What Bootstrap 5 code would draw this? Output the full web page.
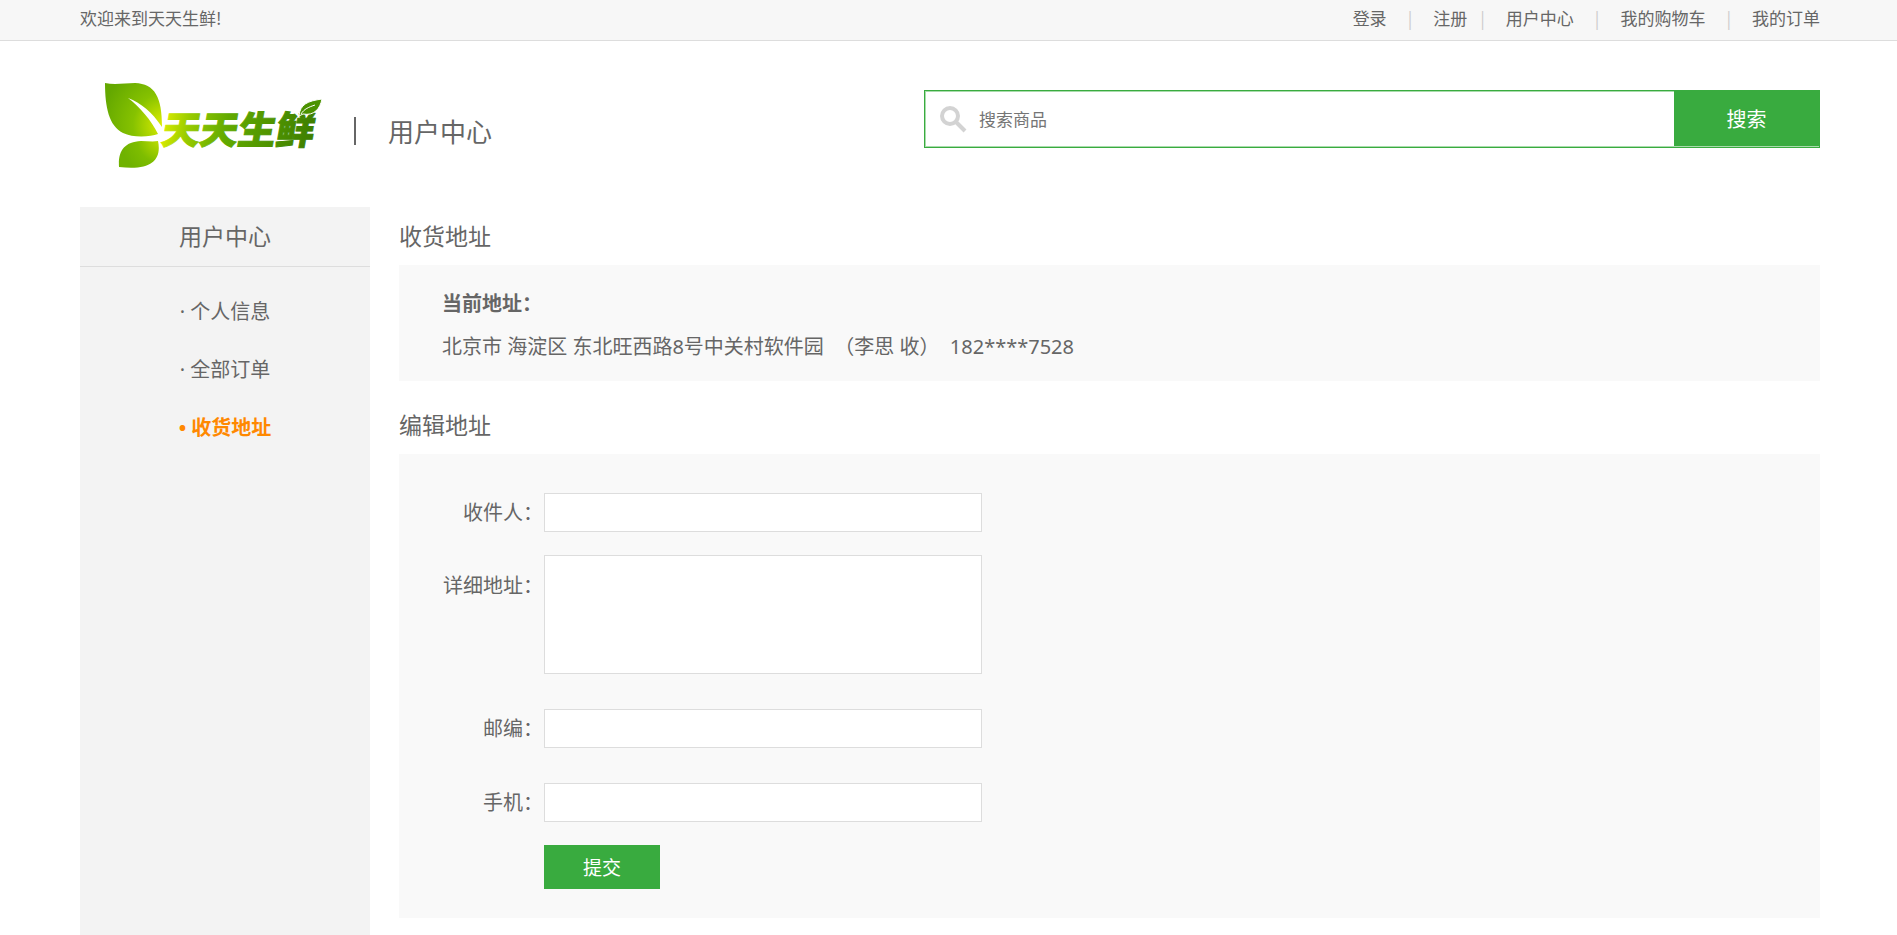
<!DOCTYPE html>
<html lang="zh-CN">
<head>
<meta charset="utf-8">
<meta name="viewport" content="width=device-width, initial-scale=1">
<title>天天生鲜 - 用户中心</title>
<link href="https://cdn.jsdelivr.net/npm/bootstrap@5.3.0/dist/css/bootstrap.min.css" rel="stylesheet">
<style>
:root { --green: #39ab3f; --ink: #666; --line: #ddd; }
body { font-family: "Noto Sans CJK SC", sans-serif; font-size: 20px; line-height: 30px; color: var(--ink); background: #fff; }
a { color: inherit; text-decoration: none; }
.wrap { padding-left: 80px; padding-right: 77px; }
.topbar { background: #f7f7f7; border-bottom: 1px solid var(--line); font-size: 17px; line-height: 24px; padding-top: 6px; padding-bottom: 10px; }
.topbar li + li::before { content: "|"; color: #ccc; margin: 0 21px; }
.topbar li.snug + li::before { margin-left: 13px; }
.brand-row { padding-top: 42px; padding-bottom: 39px; }
.brand-logo { margin-left: 25px; }
.brand-sub { font-size: 26px; line-height: 40px; gap: 32px; margin: 11px 0 0 29px; }
.brand-sub i { width: 2px; height: 28px; background: var(--ink); }
.search-box { width: 896px; height: 58px; margin-top: 7px; border: 1px solid var(--green); box-shadow: inset 0 0 0 1px #a9dcac; }
.search-box svg { margin: 0 12px 0 15px; }
.search-box input { font-size: 17px; color: var(--ink); }
.search-box input::placeholder { color: #757575; opacity: 1; }
.search-box button { width: 145px; margin-bottom: 1px; font-size: 20px; }
.btn-fresh, .btn-fresh:hover, .btn-fresh:active { background: var(--green); color: #fff; border: 0; border-radius: 0; padding: 0; }
.sidebar { width: 290px; min-height: 728px; background: #f3f3f3; }
.section-title { font-size: 23px; line-height: 30px; font-weight: 400; margin: 0; }
.sidebar .section-title { padding: 13px 0 16px; border-bottom: 1px solid var(--line); }
.sidebar ul { padding-top: 16px; }
.sidebar li { line-height: 58px; }
.sidebar ul, .panel-now { font-family: "Noto Sans", "Noto Sans CJK SC", sans-serif; }
.sidebar .current { color: #ff8800; font-weight: 700; }
.content-col { margin-left: 29px; }
.content-col .section-title { padding: 13px 0 15px; }
.panel { background: #f9f9f9; }
.panel-now { padding: 24px 43px 19px; margin-bottom: 15px; }
.panel-now p { margin: 12px 0 0; line-height: 31px; }
.panel-edit { padding: 39px 43px 29px; }
.field-row { margin-bottom: 23px; }
.field-row-wide { margin-bottom: 35px; }
.field-label { width: 102px; padding-right: 1px; line-height: 38px; }
.field-box { width: 438px; max-width: 100%; height: 39px; border: 1px solid var(--line); border-radius: 0; padding: 0 8px; font-size: 19px; }
textarea.field-box { height: 119px; resize: none; }
.label-low { padding-top: 11px; }
.btn-send { width: 116px; height: 44px; font-size: 19px; }
</style>
</head>
<body>
<div class="topbar wrap d-flex justify-content-between">
  <div>欢迎来到天天生鲜!</div>
  <ul class="list-unstyled d-flex mb-0">
    <li><a href="#">登录</a></li>
    <li class="snug"><a href="#">注册</a></li>
    <li><a href="#">用户中心</a></li>
    <li><a href="#">我的购物车</a></li>
    <li><a href="#">我的订单</a></li>
  </ul>
</div>

<header class="brand-row wrap d-flex justify-content-between align-items-start">
  <div class="d-flex align-items-center">
    <a href="#" class="brand-logo d-block" aria-label="天天生鲜">
      <svg class="d-block" width="220" height="85" viewBox="0 0 220 85">
        <defs>
          <radialGradient id="leafA" gradientUnits="userSpaceOnUse" cx="60" cy="42" r="64">
            <stop offset="0" stop-color="#e2f000"/><stop offset=".5" stop-color="#86c200"/><stop offset="1" stop-color="#64a800"/>
          </radialGradient>
          <radialGradient id="leafB" gradientUnits="userSpaceOnUse" cx="56" cy="56" r="40">
            <stop offset="0" stop-color="#c4e000"/><stop offset=".6" stop-color="#7ebd00"/><stop offset="1" stop-color="#6fb200"/>
          </radialGradient>
          <linearGradient id="wordFill" gradientUnits="userSpaceOnUse" x1="60" y1="0" x2="214" y2="0">
            <stop offset="0" stop-color="#e6f200"/><stop offset=".2" stop-color="#98cb00"/><stop offset=".45" stop-color="#62aa00"/><stop offset="1" stop-color="#3f8000"/>
          </linearGradient>
        </defs>
        <path fill="url(#leafA)" d="M0 0C10 2 20 0 30 0C50 1 57 14 57 44C47 29 36 20 23 15C35 24 46 37 53 51C45 54 28 55 18 50C4 43 0 24 0 0Z"/>
        <path fill="url(#leafB)" d="M14 84C13 68 19 59 36 58C42 58 48 59 53 58C57 77 46 88 14 84Z"/>
        <text x="66" y="61" transform="skewX(-10)" font-family="'Noto Sans CJK SC', sans-serif" font-weight="900" font-size="38" fill="url(#wordFill)" stroke="url(#wordFill)" stroke-width="1">天天生鲜</text>
        <path fill="#4b9200" stroke="#fff" stroke-width="1" d="M194 33C195 21 203 18 217 16C215 26 209 33 198 31Z"/>
        <path fill="none" stroke="#fff" stroke-width="1" d="M196 31C199 26 204 24 210 22"/>
      </svg>
    </a>
    <div class="brand-sub d-flex align-items-center"><i></i><span>用户中心</span></div>
  </div>
  <form class="search-box d-flex" role="search">
    <label for="q" class="d-flex align-items-center">
      <svg width="27" height="27" viewBox="0 0 27 27" fill="none" stroke="#d3d3d3" aria-label="搜索商品">
        <circle cx="10" cy="10" r="8" stroke-width="4"/><path d="M16 16L25 25" stroke-width="4"/>
      </svg>
    </label>
    <input id="q" type="text" class="flex-grow-1 border-0 bg-transparent p-0" placeholder="搜索商品">
    <button type="button" class="btn btn-fresh">搜索</button>
  </form>
</header>

<div class="wrap d-flex align-items-stretch">
  <nav class="sidebar flex-shrink-0 text-center">
    <h3 class="section-title">用户中心</h3>
    <ul class="list-unstyled mb-0">
      <li><a href="#">· 个人信息</a></li>
      <li><a href="#">· 全部订单</a></li>
      <li><a href="#" class="current">• 收货地址</a></li>
    </ul>
  </nav>
  <main class="content-col flex-grow-1">
    <h3 class="section-title">收货地址</h3>
    <section class="panel panel-now">
      <strong class="d-block">当前地址：</strong>
      <p>北京市 海淀区 东北旺西路8号中关村软件园 &nbsp;（李思 收）&nbsp; 182****7528</p>
    </section>
    <h3 class="section-title">编辑地址</h3>
    <form class="panel panel-edit">
      <div class="field-row d-flex">
        <label class="field-label" for="receiver"><span class="d-block text-end">收件人：</span></label>
        <input id="receiver" type="text" class="field-box">
      </div>
      <div class="field-row-wide d-flex">
        <label class="field-label label-low" for="detail"><span class="d-block text-end">详细地址：</span></label>
        <textarea id="detail" class="field-box"></textarea>
      </div>
      <div class="field-row-wide d-flex">
        <label class="field-label" for="zip"><span class="d-block text-end">邮编：</span></label>
        <input id="zip" type="text" class="field-box">
      </div>
      <div class="field-row d-flex">
        <label class="field-label" for="phone"><span class="d-block text-end">手机：</span></label>
        <input id="phone" type="text" class="field-box">
      </div>
      <div class="d-flex">
        <span class="field-label"></span>
        <button type="button" class="btn btn-fresh btn-send">提交</button>
      </div>
    </form>
  </main>
</div>
<script src="https://cdn.jsdelivr.net/npm/bootstrap@5.3.0/dist/js/bootstrap.bundle.min.js"></script>
</body>
</html>
